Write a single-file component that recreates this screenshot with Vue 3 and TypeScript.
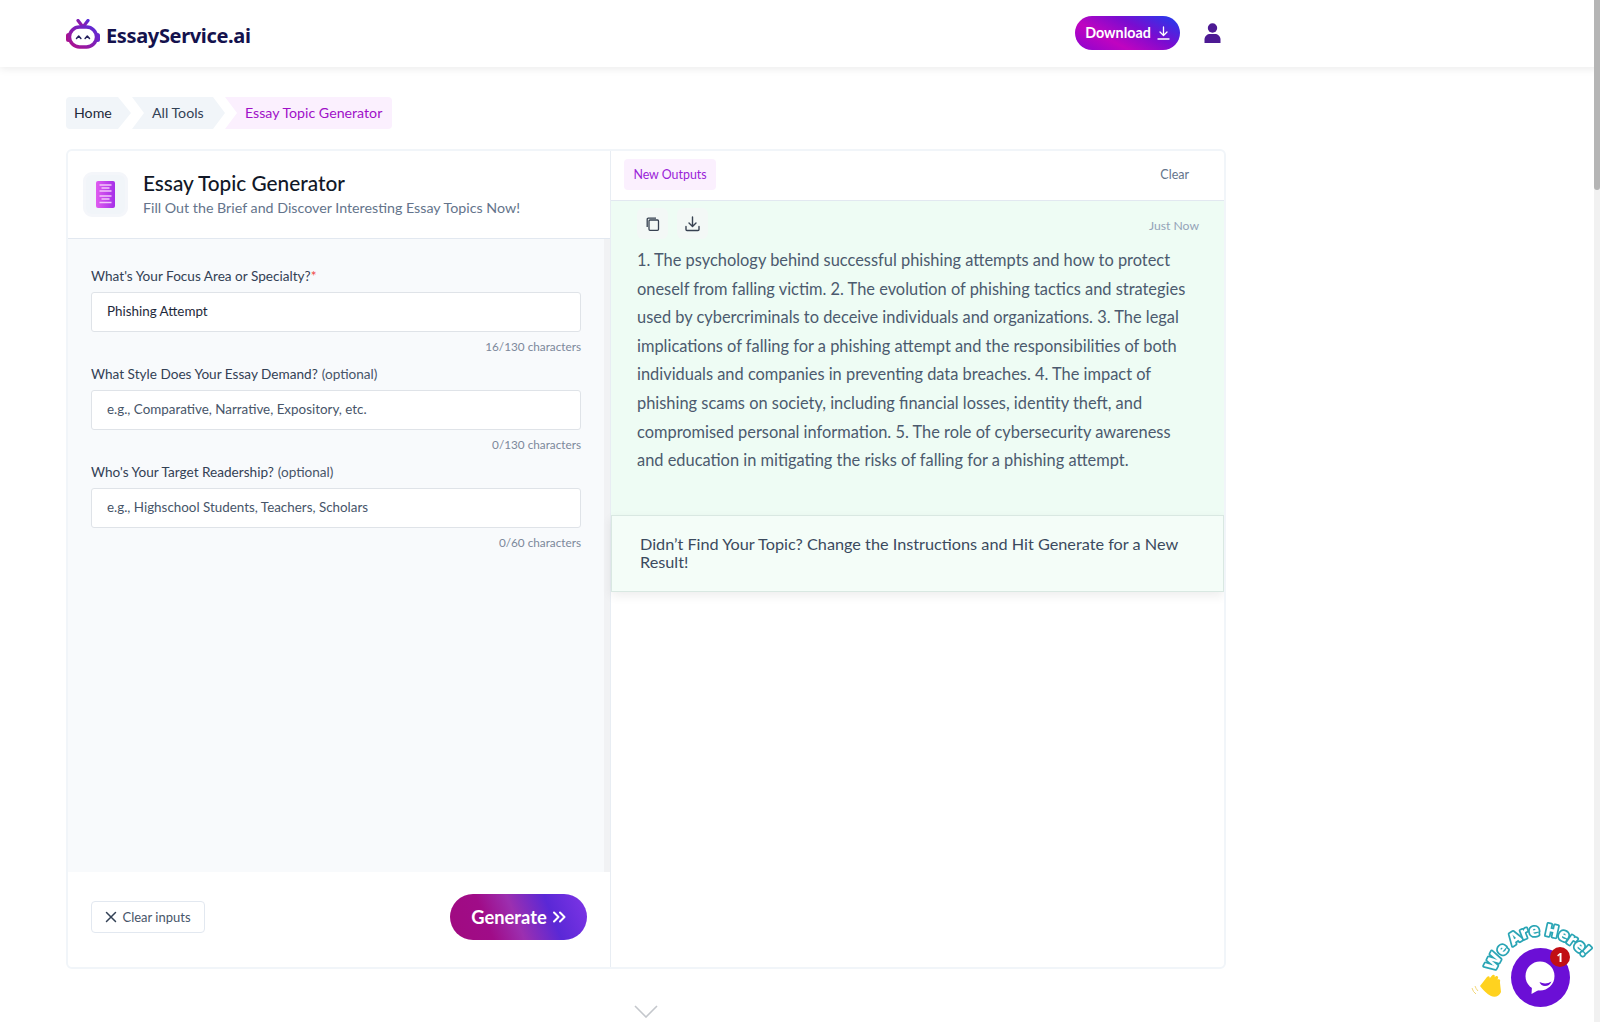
<script setup lang="ts">
interface Field {
  label: string
  hint?: string
  required?: boolean
  value?: string
  placeholder?: string
  count: string
}
const fields: Field[] = [
  { label: "What's Your Focus Area or Specialty?", required: true, value: 'Phishing Attempt', count: '16/130 characters' },
  { label: 'What Style Does Your Essay Demand?', hint: '(optional)', placeholder: 'e.g., Comparative, Narrative, Expository, etc.', count: '0/130 characters' },
  { label: "Who's Your Target Readership?", hint: '(optional)', placeholder: 'e.g., Highschool Students, Teachers, Scholars', count: '0/60 characters' }
]
const outputLines: string[] = [
  '1. The psychology behind successful phishing attempts and how to protect',
  'oneself from falling victim. 2. The evolution of phishing tactics and strategies',
  'used by cybercriminals to deceive individuals and organizations. 3. The legal',
  'implications of falling for a phishing attempt and the responsibilities of both',
  'individuals and companies in preventing data breaches. 4. The impact of',
  'phishing scams on society, including financial losses, identity theft, and',
  'compromised personal information. 5. The role of cybersecurity awareness',
  'and education in mitigating the risks of falling for a phishing attempt.'
]
</script>

<template>
  <div class="page">
    <header class="topbar">
      <div class="brand">
        <svg class="logo" width="34" height="30" viewBox="0 0 34 30">
          <defs>
            <linearGradient id="lg" x1="0" y1="1" x2="1" y2="0">
              <stop offset="0" stop-color="#b0108c" />
              <stop offset="1" stop-color="#5a2bd8" />
            </linearGradient>
          </defs>
          <path d="M12 1.5 L17 8 L22 1.5" fill="none" stroke="url(#lg)" stroke-width="3.2" stroke-linecap="round" stroke-linejoin="round" />
          <rect x="0" y="14" width="5" height="9" rx="2.5" fill="#a8108f" />
          <rect x="29" y="14" width="5" height="9" rx="2.5" fill="#6a25cf" />
          <rect x="3.5" y="8" width="27" height="20" rx="10" fill="#fff" stroke="url(#lg)" stroke-width="3.4" />
          <path d="M10.5 19.5 L12.7 17 L14.9 19.5 M19.1 19.5 L21.3 17 L23.5 19.5" fill="none" stroke="#23205c" stroke-width="1.5" stroke-linecap="round" stroke-linejoin="round" />
        </svg>
        <span class="brand-name">EssayService.ai</span>
      </div>
      <div class="top-actions">
        <button class="download">
          Download
          <svg width="13" height="14" viewBox="0 0 13 14" fill="none" stroke="#fff" stroke-width="1.3" stroke-linecap="round" stroke-linejoin="round">
            <path d="M6.5 1v8.4M3 6l3.5 3.5L10 6M1 13h11" />
          </svg>
        </button>
        <svg class="user" width="17" height="20" viewBox="0 0 17 20" fill="#4d1a94">
          <circle cx="8.5" cy="5" r="4.7" />
          <path d="M0.5 20v-3.5C0.5 13 3.5 11 6 11h5c2.5 0 5.5 2 5.5 5.5V20z" />
        </svg>
      </div>
    </header>

    <main class="main">
      <nav class="crumbs">
        <span class="crumb home">Home</span>
        <span class="crumb tools">All Tools</span>
        <span class="crumb current">Essay Topic Generator</span>
      </nav>

      <section class="card">
        <div class="left">
          <div class="tool-head">
            <div class="tool-icon">
              <svg width="19" height="27" viewBox="0 0 19 27">
                <defs>
                  <linearGradient id="dg" x1="0" y1="0" x2="1" y2="0">
                    <stop offset="0" stop-color="#e05cf0" />
                    <stop offset="1" stop-color="#a52fe8" />
                  </linearGradient>
                </defs>
                <rect width="19" height="27" rx="2" fill="url(#dg)" />
                <path d="M3.5 4h12M5.5 7h8M3.5 10h12M3.5 15h12M5.5 18h8M3.5 21.5h12" stroke="#f3c8fa" stroke-width="1.6" />
              </svg>
            </div>
            <div>
              <h1 class="tool-title">Essay Topic Generator</h1>
              <p class="tool-sub">Fill Out the Brief and Discover Interesting Essay Topics Now!</p>
            </div>
          </div>

          <div class="form">
            <div v-for="f in fields" :key="f.label" class="field">
              <label class="label">{{ f.label }}<span v-if="f.required" class="req">*</span><span v-if="f.hint" class="hint">{{ f.hint }}</span></label>
              <input class="input" :value="f.value" :placeholder="f.placeholder" />
              <div class="count">{{ f.count }}</div>
            </div>
          </div>

          <div class="left-foot">
            <button class="clear-inputs">
              <svg width="12" height="12" viewBox="0 0 12 12" stroke="#334155" stroke-width="1.5" stroke-linecap="round"><path d="M1.5 1.5l9 9M10.5 1.5l-9 9" /></svg>
              Clear inputs
            </button>
            <button class="generate">
              Generate
              <svg width="14" height="12" viewBox="0 0 14 12" fill="none" stroke="#fff" stroke-width="2" stroke-linecap="round" stroke-linejoin="round"><path d="M2 1.5L6.5 6 2 10.5M8 1.5L12.500 6 8 10.500" /></svg>
            </button>
          </div>
        </div>

        <div class="right">
          <div class="out-head">
            <span class="tab">New Outputs</span>
            <span class="clear">Clear</span>
          </div>
          <div class="output">
            <div class="out-tools">
              <span class="tool-btn">
                <svg width="14" height="14" viewBox="0 0 14 14" fill="none" stroke="#374151" stroke-width="1.3"><rect x="3" y="3" width="9.500" height="10.300" rx="1" /><path d="M1.200 10V2.200a1 1 0 0 1 1-1H10" /></svg>
              </span>
              <span class="tool-btn">
                <svg width="15" height="16" viewBox="0 0 15 16" fill="none" stroke="#374151" stroke-width="1.4" stroke-linecap="round" stroke-linejoin="round"><path d="M7.500 1v9M4 7l3.500 3.500L11 7M1 10.500v3a1 1 0 0 0 1 1h11a1 1 0 0 0 1-1v-3" /></svg>
              </span>
              <span class="just-now">Just Now</span>
            </div>
            <p class="out-text"><span v-for="l in outputLines" :key="l" class="out-line">{{ l }}</span></p>
          </div>
          <div class="notice">Didn’t Find Your Topic? Change the Instructions and Hit Generate for a New Result!</div>
        </div>
      </section>

      <div class="more">
        <svg width="24" height="13" viewBox="0 0 24 13" fill="none" stroke="#c4c7cc" stroke-width="1.600"><path d="M1 1l11 11L23 1" /></svg>
      </div>
    </main>

    <div class="chat-widget">
      <svg width="130" height="104" viewBox="0 0 130 104">
        <defs>
          <path id="arc" d="M25 70 C 35 40, 80 6, 124 68" />
        </defs>
        <text class="here"><textPath href="#arc">We Are Here!</textPath></text>
        <path d="M10 84 L17 75 c1.500-1.800 3.500-.5 2.500 1.500 l2.500-3 c1.500-1.800 3.800-.2 2.500 1.800 l1-.8 c1.500-1.200 3.400.4 2.400 2 l-.5 1 c2-1 3.500 .5 2.500 2.500 L31 90 c-1.500 4-6 6-10 4 c-4-2-8-6-11-10z" fill="#ffd21f" />
        <path d="M2 86 q1 4 4 6 M5 84 q1 3 3 5" fill="none" stroke="#f2d675" stroke-width="1" />
        <circle cx="70.500" cy="75.500" r="29.500" fill="#6b0fd6" />
        <circle cx="70" cy="74" r="14.500" fill="#fff" />
        <path d="M62 84l-.5 8 8-4.500z" fill="#fff" />
        <path d="M69.500 80q6 3 12-.5q-2 4.500-6.500 4.500q-4 0-5.500-4z" fill="#6b0fd6" />
        <circle cx="90" cy="55" r="10" fill="#c10f14" />
        <text x="90" y="59.500" class="badge-num">1</text>
      </svg>
    </div>
    <div class="scrollbar"><div class="thumb"></div></div>
  </div>
</template>

<style>
html, body { margin: 0; overflow: hidden; background: #fff; }
</style>

<style scoped>
.page {
  height: 1022px;
  width: 1600px;
  font-family: "Lato", "Noto Sans", sans-serif;
  color: #1e293b;
  overflow: hidden;
}
button { font-family: inherit; cursor: pointer; }
.topbar {
  height: 67px;
  box-sizing: border-box;
  padding: 0 379px 0 66px;
  display: flex;
  align-items: center;
  justify-content: space-between;
  box-shadow: 0 2px 8px rgba(0, 0, 0, .08);
  position: relative;
}
.brand { display: flex; align-items: center; gap: 6px; }
.brand-name { font: 700 20px "Noto Sans", sans-serif; color: #14124d; letter-spacing: -.35px; margin-top: 3px; }
.top-actions { display: flex; align-items: center; gap: 24px; margin-top: -2px; }
.download {
  width: 105px;
  height: 34px;
  padding: 0;
  border: 0;
  border-radius: 17px;
  color: #fff;
  font-weight: 700;
  font-size: 14.300px;
  display: flex;
  align-items: center;
  justify-content: center;
  gap: 6px;
  background: linear-gradient(28deg, #8a05d0 0%, #c004c0 32%, #7a0cd0 62%, #1a40f0 100%);
}
.main { padding: 30px 0 0 66px; width: 1160px; }
.crumbs { display: flex; height: 32px; font-size: 14.200px; }
.crumb { display: flex; align-items: center; box-sizing: border-box; padding-bottom: 2px; }
.home {
  width: 65px;
  padding-left: 8px;
  color: #1e293b;
  background: #f1f5f9;
  border-radius: 4px 0 0 4px;
  clip-path: polygon(0 0, 52px 0, 100% 50%, 52px 100%, 0 100%);
}
.tools {
  width: 93px;
  margin-left: 1px;
  padding-left: 20px;
  color: #334155;
  background: #f1f5f9;
  clip-path: polygon(0 0, 81px 0, 100% 50%, 81px 100%, 0 100%, 12px 50%);
}
.current {
  width: 167px;
  padding-left: 20px;
  color: #a010c8;
  background: #fbf0fe;
  border-radius: 0 4px 4px 0;
  clip-path: polygon(0 0, 100% 0, 100% 100%, 0 100%, 12px 50%);
}
.card {
  margin-top: 20px;
  height: 820px;
  box-sizing: border-box;
  border: 2px solid #f1f5f9;
  border-radius: 6px;
  display: grid;
  grid-template-columns: 543px 1fr;
  overflow: hidden;
}
.left {
  display: flex;
  flex-direction: column;
  border-right: 1px solid #e8edf3;
  min-height: 0;
}
.tool-head {
  height: 88px;
  box-sizing: border-box;
  padding: 0 0 1px 15px;
  display: flex;
  align-items: center;
  gap: 15px;
  border-bottom: 1px solid #e2e8f0;
  flex: none;
}
.tool-icon {
  width: 45px;
  height: 45px;
  box-sizing: border-box;
  border: 3px solid #f4f6fa;
  border-radius: 9px;
  background: #f1f5f9;
  display: flex;
  align-items: center;
  justify-content: center;
}
.tool-title { margin: 0; font-size: 20.800px; font-weight: 500; line-height: 24px; color: #111827; }
.tool-sub { margin: 3px 0 0; font-size: 14.250px; line-height: 20px; color: #64748b; }
.form {
  flex: 1;
  background: #f8fafc;
  box-shadow: inset -6px 0 0 #f1f2f4;
  padding: 28px 29px 0 23px;
}
.field { height: 98px; }
.label { display: block; font-size: 13.600px; line-height: 18px; height: 25px; color: #334155; }
.req { color: #ef4444; }
.hint { color: #475569; margin-left: 4px; }
.input {
  display: block;
  width: 100%;
  height: 40px;
  box-sizing: border-box;
  padding: 0 15px 3px;
  border: 1px solid #dfe3e8;
  border-radius: 3px;
  background: #fff;
  font: 13.400px "Lato", "Noto Sans", sans-serif;
  color: #1e293b;
  outline: none;
}
.input::placeholder { color: #475569; opacity: 1; }
.count { margin-top: 7px; text-align: right; font-size: 11.750px; line-height: 16px; color: #7c889b; }
.left-foot {
  height: 95px;
  flex: none;
  box-sizing: border-box;
  padding: 22px 23px 0 23px;
  display: flex;
  justify-content: space-between;
}
.clear-inputs {
  width: 114px;
  height: 32px;
  margin-top: 7px;
  padding: 0;
  border: 1px solid #e2e8f0;
  border-radius: 4px;
  background: #fff;
  color: #475569;
  font-size: 13px;
  display: flex;
  align-items: center;
  justify-content: center;
  gap: 5px;
}
.generate {
  width: 137px;
  height: 46px;
  padding: 0;
  border: 0;
  border-radius: 23px;
  color: #fff;
  font-size: 18.300px;
  font-weight: 700;
  display: flex;
  align-items: center;
  justify-content: center;
  gap: 5px;
  background: linear-gradient(68deg, #a00a80 0%, #a00c88 28%, #9c2fb0 48%, #5a28d6 72%, #7f35e6 100%);
}
.right { display: flex; flex-direction: column; min-width: 0; }
.out-head {
  height: 50px;
  flex: none;
  box-sizing: border-box;
  padding: 8px 35px 0 13px;
  display: flex;
  justify-content: space-between;
  border-bottom: 1px solid #e2e8f0;
}
.tab {
  width: 92px;
  height: 31px;
  border-radius: 4px;
  background: #fbf0fe;
  color: #9a22d8;
  font-size: 12.400px;
  display: flex;
  align-items: center;
  justify-content: center;
}
.clear { font-size: 12.500px; line-height: 31px; color: #64748b; }
.output {
  height: 314px;
  flex: none;
  box-sizing: border-box;
  padding: 7px 25px 0 26px;
  background: #eefcf4;
}
.out-tools { display: flex; align-items: center; gap: 9px; height: 31px; }
.tool-btn {
  width: 31px;
  height: 31px;
  border-radius: 6px;
  background: #f3f8f6;
  display: flex;
  align-items: center;
  justify-content: center;
}
.just-now { margin: 4px 0 0 auto; font-size: 12.200px; color: #94a3b8; }
.out-text { margin: 7px 0 0; font-size: 16.400px; line-height: 28.600px; color: #4b5a6e; }
.out-line { display: block; white-space: nowrap; }
.notice {
  height: 77px;
  flex: none;
  box-sizing: border-box;
  padding: 19px 40px 0 28px;
  background: #f4fdf8;
  border: 1px solid #d9e8e2;
  font-size: 16.250px;
  line-height: 18px;
  color: #3b4a5e;
  box-shadow: 0 4px 10px rgba(0, 0, 0, .07);
}
.more { display: flex; justify-content: center; margin-top: 36px; }
.more svg { display: block; }
.chat-widget { position: fixed; left: 1470px; top: 902px; width: 130px; height: 104px; }
.chat-widget svg { display: block; overflow: visible; }
.here {
  font: 800 16.500px "Open Sans", sans-serif;
  fill: #fff;
  stroke: #2aa5b5;
  stroke-width: 3.500px;
  stroke-linejoin: round;
  paint-order: stroke;
}
.badge-num { font: 700 12px "Noto Sans", sans-serif; fill: #fff; text-anchor: middle; }
.scrollbar { position: fixed; right: 0; top: 0; width: 6px; height: 1022px; background: #f1f1f1; }
.thumb { height: 190px; background: #b5b5b5; border-radius: 0 0 3px 3px; }
</style>
